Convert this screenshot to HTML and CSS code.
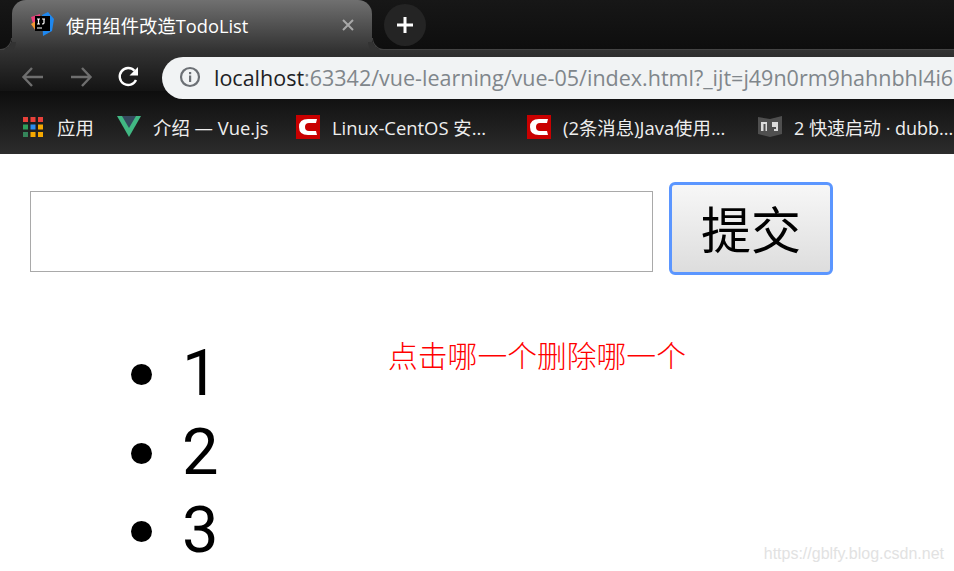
FILE: index.html
```html
<!DOCTYPE html>
<html lang="en">
<head>
    <meta charset="UTF-8">
    <meta name="viewport" content="width=device-width, initial-scale=1.0">
    <title>使用组件改造TodoList</title>
    <link rel="stylesheet" href="styles.css">
</head>
<body>
    <div class="tabstrip">
        <div class="tab">
            <svg class="tab-icon" width="24" height="24" viewBox="0 0 24 24">
                <path d="M1 5 L10 2 L10 19 L5 18 Z" fill="#f0407c"/>
                <path d="M1 12 L6 9 L6 19 Z" fill="#f59a32"/>
                <path d="M12 3 L18 0 L24 7 L22 19 L13 24 Z" fill="#1e88f0"/>
                <rect x="5" y="4" width="15" height="15" fill="#000"/>
                <path d="M7 7 H10 M8.5 7 V12 M7 12 H10 M12 7 H15 M14 7 V11 Q14 12 12 12 M7 16 H12" stroke="#fff" stroke-width="1.2" fill="none"/>
            </svg>
            <span class="tab-title">使用组件改造TodoList</span>
            <svg class="tab-close" width="12" height="12" viewBox="0 0 12 12">
                <path d="M1 1 L11 11 M11 1 L1 11" stroke="#a8a8a8" stroke-width="2"/>
            </svg>
        </div>
        <div class="new-tab">
            <svg width="20" height="20" viewBox="0 0 20 20">
                <path d="M10 2 V18 M2 10 H18" stroke="#fff" stroke-width="3"/>
            </svg>
        </div>
    </div>

    <div class="toolbar">
        <svg class="nav-icon" width="24" height="24" viewBox="0 0 24 24">
            <path d="M22 12 H3 M11 3 L2.5 12 L11 21" stroke="#6e6e6e" stroke-width="2.4" fill="none"/>
        </svg>
        <svg class="nav-icon" width="24" height="24" viewBox="0 0 24 24">
            <path d="M2 12 H21 M13 3 L21.5 12 L13 21" stroke="#6e6e6e" stroke-width="2.4" fill="none"/>
        </svg>
        <svg class="nav-icon" width="24" height="24" viewBox="0 0 24 24">
            <path d="M19 15 A8.5 8.5 0 1 1 17.5 5.8" stroke="#fff" stroke-width="2.4" fill="none"/>
            <path d="M21 2 V10.5 H12.5 Z" fill="#fff"/>
        </svg>
        <div class="omnibox">
            <svg class="info-icon" width="22" height="22" viewBox="0 0 22 22">
                <circle cx="11" cy="11" r="9" stroke="#6c7075" stroke-width="2.2" fill="none"/>
                <rect x="10" y="9.5" width="2.2" height="6.5" fill="#6c7075"/>
                <rect x="10" y="6" width="2.2" height="2.2" fill="#6c7075"/>
            </svg>
            <span class="url"><span class="host">localhost</span>:63342/vue-learning/vue-05/index.html?_ijt=j49n0rm9hahnbhl4i6</span>
        </div>
    </div>

    <div class="bookmarks">
        <div class="bookmark apps">
            <svg width="20" height="20" viewBox="0 0 20 20">
                <rect x="0" y="0" width="5" height="5" fill="#e8413a"/>
                <rect x="7.5" y="0" width="5" height="5" fill="#e8413a"/>
                <rect x="15" y="0" width="5" height="5" fill="#e8413a"/>
                <rect x="0" y="7.5" width="5" height="5" fill="#2e9e5b"/>
                <rect x="7.5" y="7.5" width="5" height="5" fill="#2a8cf0"/>
                <rect x="15" y="7.5" width="5" height="5" fill="#f5a800"/>
                <rect x="0" y="15" width="5" height="5" fill="#35855a"/>
                <rect x="7.5" y="15" width="5" height="5" fill="#f5a800"/>
                <rect x="15" y="15" width="5" height="5" fill="#f5a800"/>
            </svg>
            <span>应用</span>
        </div>
        <div class="bookmark vue">
            <svg width="24" height="21" viewBox="0 0 24 21">
                <path d="M0 0 H24 L12 21 Z" fill="#41b883"/>
                <path d="M5 0 H19 L12 12 Z" fill="#35495e"/>
            </svg>
            <span>介绍 — Vue.js</span>
        </div>
        <div class="bookmark csdn-one">
            <svg width="24" height="24" viewBox="0 0 24 24">
                <rect width="24" height="24" fill="#c90000"/>
                <path d="M21 4 H12 Q3 4 3 12 Q3 20 12 20 H21 L20 16 H13 Q9 16 9 12 Q9 8 13 8 H20 Z" fill="#fff"/>
            </svg>
            <span>Linux-CentOS 安...</span>
        </div>
        <div class="bookmark csdn-two">
            <svg width="24" height="24" viewBox="0 0 24 24">
                <rect width="24" height="24" fill="#c90000"/>
                <path d="M21 4 H12 Q3 4 3 12 Q3 20 12 20 H21 L20 16 H13 Q9 16 9 12 Q9 8 13 8 H20 Z" fill="#fff"/>
            </svg>
            <span>(2条消息)Java使用...</span>
        </div>
        <div class="bookmark dubbo">
            <svg width="24" height="24" viewBox="0 0 24 24">
                <path d="M0 2 L12 4 L24 1 V19 L12 22 L0 19 Z" fill="#4f4f4f"/>
                <path d="M3 7 H9 V16 H7.5 V9 H5.5 V16 H3 Z M14 7 H20 V16 H16 V14 H18 V12 H14 Z" fill="#dcdcdc"/>
            </svg>
            <span>2 快速启动 · dubb...</span>
        </div>
    </div>

    <div class="page">
        <div class="todo-form">
            <input class="todo-input" type="text">
            <button class="todo-submit">提交</button>
        </div>
        <div class="todo-body">
            <ul class="todo-list">
                <li>1</li>
                <li>2</li>
                <li>3</li>
            </ul>
            <p class="todo-hint">点击哪一个删除哪一个</p>
        </div>
        <span class="watermark">https://gblfy.blog.csdn.net</span>
    </div>
</body>
</html>
```

FILE: styles.css
```css
/* General Styling */
html, body {
    height: 100%;
}

body {
    margin: 0;
    overflow: hidden;
    background-color: #ffffff;
    font-family: "Open Sans", "Noto Sans CJK SC", sans-serif;
    display: flex;
    flex-direction: column;
}

/* Tab strip */
.tabstrip {
    height: 50px;
    flex: none;
    display: flex;
    align-items: flex-start;
    padding-left: 12px;
    box-sizing: border-box;
    background: linear-gradient(#171717, #0e0e0e);
    border-bottom: 1px solid #444444;
}

.tab {
    position: relative;
    width: 360px;
    height: 50px;
    box-sizing: border-box;
    padding: 0 18px 0 18px;
    display: flex;
    align-items: center;
    border-radius: 14px 14px 0 0;
    background: linear-gradient(#707070, #333333);
    flex: none;
}

/* little curves where the tab meets the toolbar */
.tab::before,
.tab::after {
    content: "";
    position: absolute;
    bottom: 0;
    width: 12px;
    height: 12px;
    box-sizing: border-box;
}

.tab::before {
    left: -12px;
    border-bottom-right-radius: 12px;
    border-right: 1px solid #444444;
    border-bottom: 1px solid #444444;
    box-shadow: 4px 4px 0 #333333;
}

.tab::after {
    right: -12px;
    border-bottom-left-radius: 12px;
    border-left: 1px solid #444444;
    border-bottom: 1px solid #444444;
    box-shadow: -4px 4px 0 #333333;
}

.tab-icon {
    flex: none;
    position: relative;
    top: -1px;
}

.tab-title {
    margin-left: 12px;
    font-size: 18.3px;
    color: #ffffff;
    flex: 1;
}

.new-tab {
    width: 42px;
    height: 42px;
    margin: 4px 0 0 12px;
    border-radius: 50%;
    background-color: #242424;
    display: flex;
    align-items: center;
    justify-content: center;
}

/* Toolbar */
.toolbar {
    height: 41px;
    flex: none;
    box-sizing: border-box;
    display: flex;
    align-items: flex-start;
    padding-left: 21px;
    gap: 24px;
    background: linear-gradient(#333333, #141414);
    position: relative;
    z-index: 1;
}

.nav-icon {
    flex: none;
    margin-top: 15px;
}

/* the pill hangs over the top of the bookmarks bar */
.omnibox {
    flex: none;
    width: 795px;
    height: 42px;
    margin: 7px 0 0 -3px;
    box-sizing: border-box;
    padding: 0 0 2px 17px;
    display: flex;
    align-items: center;
    border-radius: 21px 0 0 21px;
    background-color: #f1f3f4;
    white-space: nowrap;
    overflow: hidden;
}

.info-icon {
    flex: none;
}

.url {
    margin-left: 13px;
    font-size: 21.5px;
    color: #80868b;
}

.host {
    color: #202124;
}

/* Bookmarks bar */
.bookmarks {
    height: 63px;
    flex: none;
    display: flex;
    align-items: center;
    padding: 8px 0 0 23px;
    box-sizing: border-box;
    background: linear-gradient(#0e0e0e, #2c2c2c);
    color: #eeeeee;
    font-size: 18.4px;
}

.bookmark {
    display: flex;
    align-items: center;
    gap: 12px;
    white-space: nowrap;
    flex: none;
}

.apps { width: 94px; gap: 14px; }
.vue { width: 179px; }
.csdn-one { width: 231px; }
.csdn-two { width: 231px; }
.dubbo { font-size: 18px; }

/* Todo page */
.page {
    flex: 1;
    position: relative;
    padding: 28px 0 0 30px;
}

.todo-form {
    display: flex;
    align-items: flex-start;
    gap: 16px;
}

.todo-input {
    width: 623px;
    height: 81px;
    margin-top: 9px;
    box-sizing: border-box;
    border: 1px solid #a9a9a9;
    padding: 0;
}

.todo-submit {
    width: 164px;
    height: 93px;
    box-sizing: border-box;
    border: 3px solid #5b96ff;
    border-radius: 6px;
    background: linear-gradient(#f7f7f7, #dddddd);
    font-family: "Noto Sans CJK SC", sans-serif;
    font-size: 50px;
    color: #000000;
    padding: 0 0 4px 0;
}

.todo-body {
    display: flex;
    align-items: flex-start;
}

.todo-list {
    margin: 59px 0 0 0;
    padding: 0 0 0 101px;
    width: 257px;
    flex: none;
    list-style: none;
    font-family: Roboto, sans-serif;
    font-size: 65px;
    line-height: 78.5px;
    color: #000000;
}

.todo-list li {
    display: flex;
    align-items: center;
}

.todo-list li::before {
    content: "";
    width: 21px;
    height: 21px;
    margin: 3px 30px 0 0;
    border-radius: 50%;
    background-color: #000000;
}

.todo-hint {
    margin: 57px 0 0 0;
    font-family: "Liberation Serif", "Noto Sans CJK SC", serif;
    font-size: 29.8px;
    font-weight: 300;
    color: #ff0000;
    white-space: nowrap;
}

.watermark {
    position: absolute;
    right: 10px;
    bottom: 8px;
    font-family: "Liberation Sans", sans-serif;
    font-size: 16px;
    color: #e2e2e2;
}
```
